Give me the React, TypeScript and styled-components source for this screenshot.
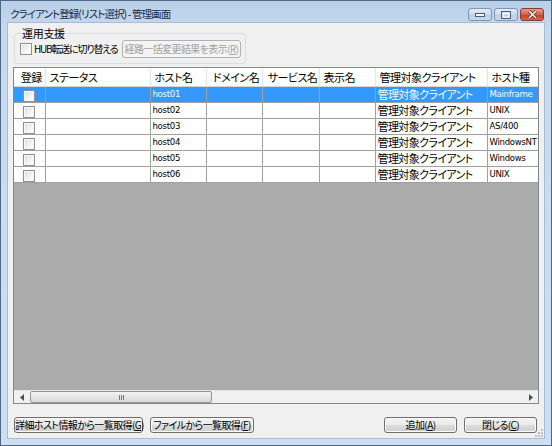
import styled, { createGlobalStyle } from 'styled-components'

const GlobalStyle = createGlobalStyle`
	html, body {
		margin: 0;
		padding: 0;
		background: #ffffff;
	}
	* {
		box-sizing: border-box;
	}
`

const FONT = `"Noto Sans CJK JP", "Liberation Sans", sans-serif`
const NARROW = `"DejaVu Sans Condensed", "Liberation Sans Narrow", "Liberation Sans", sans-serif`

const Window = styled.div`
	width: 552px;
	height: 446px;
	display: flex;
	flex-direction: column;
	border: 1px solid #4e6782;
	background: linear-gradient(180deg, #b9d0ea 0%, #c6d9ef 30px, #cddff3 100%);
	font-family: ${FONT};
	font-size: 11px;
	letter-spacing: -0.5px;
	font-feature-settings: 'palt';
	color: #000;
`

const TitleBar = styled.div`
	height: 21px;
	display: flex;
	align-items: flex-start;
	padding: 5px 7px 0 9px;
`

const TitleText = styled.div`
	flex: 1;
	line-height: 15px;
	font-size: 10.5px;
	letter-spacing: -0.9px;
	color: #1b2a3c;
`

const CaptionButtons = styled.div`
	display: flex;
	gap: 2px;
	margin-top: 2px;
`

const CaptionButton = styled.div<{ $close?: boolean }>`
	width: 24px;
	height: 13px;
	border-radius: 3px;
	display: flex;
	align-items: center;
	justify-content: center;
	border: 1px solid ${(p) => (p.$close ? '#8b3b2d' : '#7d96b6')};
	background: ${(p) =>
		p.$close
			? 'linear-gradient(180deg, #e6a08f 0%, #d2604a 50%, #c03f28 51%, #cf6a4e 100%)'
			: 'linear-gradient(180deg, #e4ecf7 0%, #ccdaeb 50%, #bccde4 51%, #cadbee 100%)'};
`

const Body = styled.div`
	position: relative;
	flex: 1;
	display: flex;
	flex-direction: column;
	margin: 0 6px 6px 6px;
	padding: 3px 7px 5px 5px;
	background: #f0f0f0;
	border: 1px solid #a9bcd3;
`

const GroupBox = styled.fieldset`
	width: 231px;
	margin: 0 0 0 1px;
	padding: 0 4px 5px 5px;
	border: 1px solid #d9dde1;
	border-radius: 3px;
	display: flex;
	align-items: center;
	gap: 0;
`

const Legend = styled.legend`
	padding: 0 1px;
	margin-left: 1px;
	line-height: 14px;
	font-size: 11px;
	letter-spacing: -0.3px;
`

const CheckLabel = styled.label`
	width: 102px;
	display: flex;
	align-items: center;
	gap: 2px;
	white-space: nowrap;
	line-height: 18px;
	font-size: 10px;
	letter-spacing: -1.2px;
`

const CheckBox = styled.span`
	display: inline-block;
	vertical-align: middle;
	width: 12px;
	height: 12px;
	border: 1px solid #8e8f8f;
	background: linear-gradient(135deg, #dcdcdc 0%, #f4f4f4 60%, #ffffff 100%);
	box-shadow: inset 0 0 0 1px #f8f8f8;
	flex-shrink: 0;
`

const Button = styled.button<{ $width: number }>`
	width: ${(p) => p.$width}px;
	height: 16px;
	padding: 0;
	border: 1px solid #707070;
	border-radius: 3px;
	background: linear-gradient(180deg, #f3f3f3 0%, #ebebeb 50%, #dddddd 51%, #cfcfcf 100%);
	box-shadow: inset 0 0 0 1px #fbfbfb;
	font-family: ${FONT};
	font-size: 10px;
	letter-spacing: -0.6px;
	font-feature-settings: 'palt';
	line-height: 14px;
	color: #000;
	white-space: nowrap;
	flex-shrink: 0;
	&:disabled {
		border-color: #adb2b5;
		background: #f4f4f4;
		box-shadow: none;
		color: #a0a0a0;
	}
`

const DisabledButton = styled(Button)`
	height: 18px;
`

const Grid = styled.div`
	flex: 1;
	display: flex;
	flex-direction: column;
	margin: 3px -2px 0 0;
	border: 1px solid #828790;
	background: #ababab;
	overflow: hidden;
`

const TableArea = styled.div`
	flex: 1;
	overflow: hidden;
`

const Table = styled.table`
	table-layout: fixed;
	border-collapse: collapse;
	width: 533px;
`

const HeadCell = styled.th<{ $align?: string }>`
	height: 18px;
	padding: 0 0 0 4px;
	background: #ffffff;
	border-right: 1px solid #e5e5e5;
	border-bottom: 1px solid #d5d5d5;
	font-weight: normal;
	text-align: ${(p) => p.$align || 'left'};
	white-space: nowrap;
	overflow: hidden;
	line-height: 16px;
`

const Row = styled.tr<{ $selected?: boolean }>`
	background: ${(p) => (p.$selected ? '#3399ff' : '#ffffff')};
	color: ${(p) => (p.$selected ? '#f4f9ff' : '#000')};
`

const Cell = styled.td<{ $narrow?: boolean; $center?: boolean }>`
	height: 16px;
	padding: 0 0 0 2px;
	border: 1px solid #a0a0a0;
	border-top: none;
	font-family: ${(p) => (p.$narrow ? NARROW : FONT)};
	font-size: ${(p) => (p.$narrow ? '9.5px' : '11px')};
	letter-spacing: ${(p) => (p.$narrow ? '-0.3px' : '-0.6px')};
	line-height: 14px;
	white-space: nowrap;
	overflow: hidden;
	vertical-align: middle;
	text-align: ${(p) => (p.$center ? 'center' : 'left')};
	&:first-child {
		border-left: none;
		padding: 0;
	}
`

const HScroll = styled.div`
	height: 13px;
	display: flex;
	align-items: stretch;
	background: #f0f0f0;
	border-top: 1px solid #e6e6e6;
`

const ArrowBox = styled.div`
	width: 15px;
	display: flex;
	align-items: center;
	justify-content: center;
`

const Track = styled.div`
	flex: 1;
	display: flex;
	padding: 0 1px;
`

const Thumb = styled.div`
	width: 182px;
	border: 1px solid #979797;
	border-radius: 2px;
	background: linear-gradient(180deg, #f3f3f3 0%, #e6e6e6 50%, #d9d9d9 100%);
	display: flex;
	align-items: center;
	justify-content: center;
	gap: 1px;
`

const Grip = styled.span`
	width: 1px;
	height: 5px;
	background: #7a7a7a;
`

const Footer = styled.div`
	display: flex;
	align-items: center;
	margin-top: 13px;
	gap: 7px;
	padding-left: 1px;
`

const Spacer = styled.div`
	flex: 1;
`

const SizeGrip = styled.svg`
	position: absolute;
	right: 0;
	bottom: 0;
`

const columns = [
	{ label: '登録', width: 31, align: 'center' },
	{ label: 'ステータス', width: 105 },
	{ label: 'ホスト名', width: 56 },
	{ label: 'ドメイン名', width: 56, align: 'center' },
	{ label: 'サービス名', width: 57, align: 'center' },
	{ label: '表示名', width: 56 },
	{ label: '管理対象クライアント', width: 112 },
	{ label: 'ホスト種', width: 60 },
]

const rows = [
	{ host: 'host01', type: 'Mainframe' },
	{ host: 'host02', type: 'UNIX' },
	{ host: 'host03', type: 'AS/400' },
	{ host: 'host04', type: 'WindowsNT' },
	{ host: 'host05', type: 'Windows' },
	{ host: 'host06', type: 'UNIX' },
]

export default function App() {
	return (
		<>
			<GlobalStyle />
			<Window>
				<TitleBar>
					<TitleText>クライアント登録(リスト選択) - 管理画面</TitleText>
					<CaptionButtons>
						<CaptionButton>
							<svg width='10' height='5' viewBox='0 0 10 5'>
								<rect x='0.5' y='1.5' width='9' height='3' fill='#fff' stroke='#4b5f7a' />
							</svg>
						</CaptionButton>
						<CaptionButton>
							<svg width='10' height='8' viewBox='0 0 10 8'>
								<rect x='0.5' y='0.5' width='9' height='7' fill='none' stroke='#4b5f7a' />
								<rect x='2' y='2.5' width='6' height='3.5' fill='none' stroke='#fff' />
							</svg>
						</CaptionButton>
						<CaptionButton $close>
							<svg width='11' height='9' viewBox='0 0 11 9'>
								<path d='M2 1 L9 8 M9 1 L2 8' stroke='#6b2418' strokeWidth='3' />
								<path d='M2 1 L9 8 M9 1 L2 8' stroke='#fff' strokeWidth='1.6' />
							</svg>
						</CaptionButton>
					</CaptionButtons>
				</TitleBar>
				<Body>
					<GroupBox>
						<Legend>運用支援</Legend>
						<CheckLabel>
							<CheckBox />
							HUB転送に切り替える
						</CheckLabel>
						<DisabledButton $width={119} disabled>
							経路一括変更結果を表示(<u>R</u>)
						</DisabledButton>
					</GroupBox>
					<Grid>
						<TableArea>
							<Table>
								<colgroup>
									{columns.map((c) => (
										<col key={c.label} style={{ width: c.width }} />
									))}
								</colgroup>
								<thead>
									<tr>
										{columns.map((c) => (
											<HeadCell key={c.label} $align={c.align}>
												{c.label}
											</HeadCell>
										))}
									</tr>
								</thead>
								<tbody>
									{rows.map((r, i) => (
										<Row key={r.host} $selected={i === 0}>
											<Cell $center>
												<CheckBox />
											</Cell>
											<Cell />
											<Cell $narrow>{r.host}</Cell>
											<Cell />
											<Cell />
											<Cell />
											<Cell>管理対象クライアント</Cell>
											<Cell $narrow>{r.type}</Cell>
										</Row>
									))}
								</tbody>
							</Table>
						</TableArea>
						<HScroll>
							<ArrowBox>
								<svg width='4' height='7' viewBox='0 0 4 7'>
									<path d='M4 0 L0 3.5 L4 7 Z' fill='#4d4d4d' />
								</svg>
							</ArrowBox>
							<Track>
								<Thumb>
									<Grip />
									<Grip />
									<Grip />
								</Thumb>
							</Track>
							<ArrowBox>
								<svg width='4' height='7' viewBox='0 0 4 7'>
									<path d='M0 0 L4 3.5 L0 7 Z' fill='#4d4d4d' />
								</svg>
							</ArrowBox>
						</HScroll>
					</Grid>
					<Footer>
						<Button $width={129}>
							詳細ホスト情報から一覧取得(<u>G</u>)
						</Button>
						<Button $width={104}>
							ファイルから一覧取得(<u>F</u>)
						</Button>
						<Spacer />
						<Button $width={73}>
							追加(<u>A</u>)
						</Button>
						<Button $width={73}>
							閉じる(<u>C</u>)
						</Button>
					</Footer>
					<SizeGrip width='10' height='10' viewBox='0 0 10 10'>
						<g fill='#b9c3cf'>
							<rect x='7' y='7' width='2' height='2' />
							<rect x='4' y='7' width='2' height='2' />
							<rect x='7' y='4' width='2' height='2' />
							<rect x='1' y='7' width='2' height='2' />
							<rect x='4' y='4' width='2' height='2' />
							<rect x='7' y='1' width='2' height='2' />
						</g>
					</SizeGrip>
				</Body>
			</Window>
		</>
	)
}
